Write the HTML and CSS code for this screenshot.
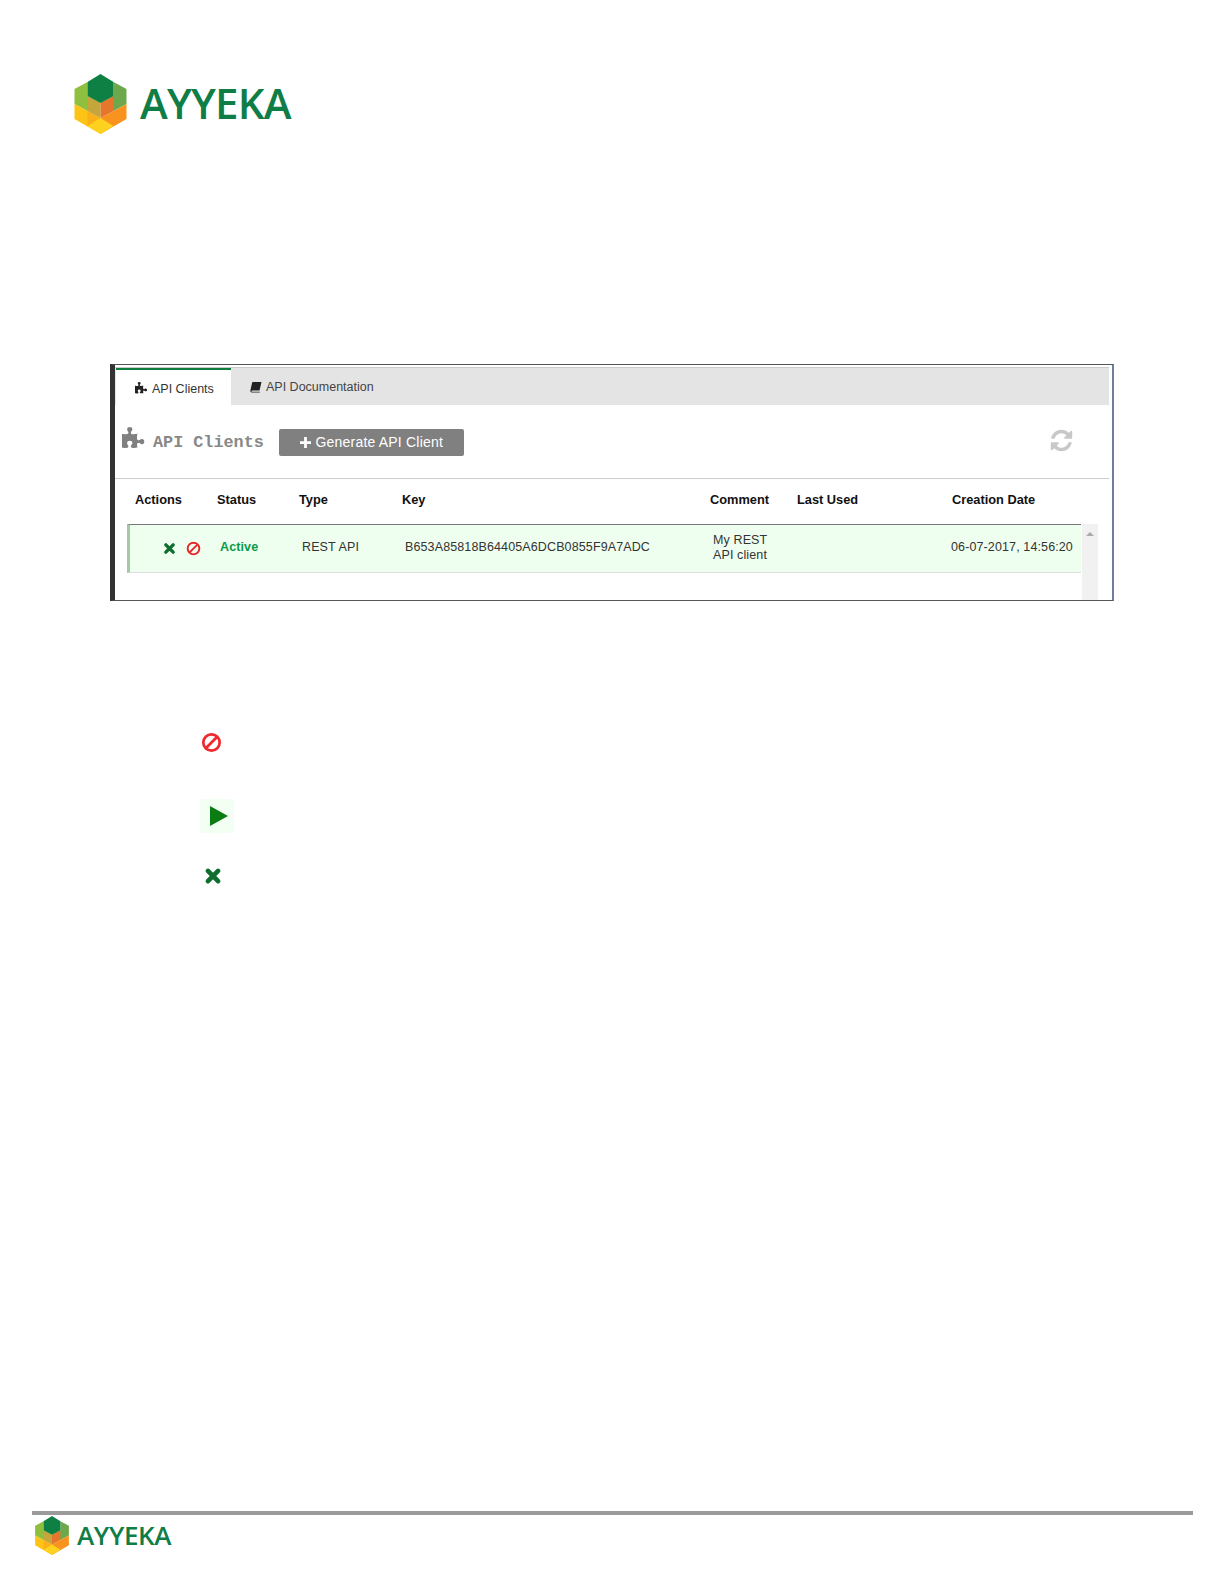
FILE: index.html
```html
<!DOCTYPE html>
<html lang="en">
<head>
<meta charset="utf-8">
<title>Ayyeka API Clients</title>
<link rel="stylesheet" href="styles.css">
</head>
<body>
<svg class="defs" width="0" height="0" aria-hidden="true">
  <symbol id="hex" viewBox="0 0 52 60">
    <polygon fill="#8ebf3f" points="0,15 13,8 13,22 26,29 13,37 0,30"/>
    <polygon fill="#6ea84c" points="52,15 39,8 39,22 26,29 39,37 52,30"/>
    <polygon fill="#fdc315" points="0,30 13,37 26,44 26,60 0,45"/>
    <polygon fill="#f7931e" points="52,30 39,37 26,44 26,60 52,45"/>
    <polygon fill="#fbb01a" points="13,37 26,44 26,52 13,52"/>
    <polygon fill="#c4a63a" points="13,22 26,29 26,44 13,37"/>
    <polygon fill="#e5762b" points="39,22 26,29 26,44 39,37"/>
    <polygon fill="#ffd21f" points="13,52 26,44 39,52 26,60"/>
    <polygon fill="#0f8043" points="26,0 39,8 39,22 26,29 13,22 13,8"/>
  </symbol>
  <symbol id="ban" viewBox="0 0 20 20">
    <circle cx="10" cy="10" r="7.8" fill="none" stroke="currentColor" stroke-width="2.6"/>
    <line x1="4.8" y1="15.2" x2="15.2" y2="4.8" stroke="currentColor" stroke-width="2.6"/>
  </symbol>
  <symbol id="cross" viewBox="0 0 16 16">
    <path d="M3.5 3.5L12.5 12.5M12.5 3.5L3.5 12.5" fill="none" stroke="currentColor" stroke-width="4.2" stroke-linecap="round"/>
  </symbol>
  <symbol id="puzzle" viewBox="0 0 1792 1792">
    <path d="M1664 1098q0 81-44.500 135t-123.500 54q-41 0-77.500-17.500t-59-38-56.500-38-71-17.500q-110 0-110 124 0 39 16 115t15 115v5q-22 0-33 1-34 3-97.500 11.500t-115.500 13.500-98 5q-61 0-103-26.500t-42-83.500q0-37 17.500-71t38-56.500 38-59 17.500-77.500q0-79-54-123.500t-135-44.500q-84 0-143 45.500t-59 127.500q0 43 15 83t33.500 64.500 33.500 53 15 50.500q0 45-46 89-37 35-117 35-95 0-245-24-9-2-27.500-4t-27.500-4l-13-2q-1 0-3-1-2 0-2-1v-1024q2 1 17.500 3.500t34 5 21.500 3.500q150 24 245 24 80 0 117-35 46-44 46-89 0-22-15-50.500t-33.500-53-33.500-64.500-15-83q0-82 59-127.500t144-45.500q80 0 134 44.500t54 123.500q0 41-17.500 77.500t-38 59-38 56.500-17.500 71q0 57 42 83.500t103 26.500q64 0 180-15t163-17v2q-1 2-3.500 17.500t-5 34-3.500 21.500q-24 150-24 245 0 80 35 117 44 46 89 46 22 0 50.500-15t53-33.500 64.500-33.500 83-15q82 0 127.500 59t45.500 143z" fill="currentColor"/>
  </symbol>
</svg>

<div class="page">
  <header class="top-logo">
    <svg class="hex-lg"><use href="#hex"/></svg>
    <span class="brand brand-lg">AYYEKA</span>
  </header>

  <section class="shot">
    <div class="tabs">
      <div class="tab tab-active">
        <svg class="tab-icon"><use href="#puzzle"/></svg>
        <span>API Clients</span>
      </div>
      <div class="tab">
        <svg class="tab-icon book" viewBox="0 0 12 12"><path d="M3 1h8.500L9.500 9.500H2.200c-.9 0-.9 1.300 0 1.300h7.800l-.2.700H1.800C.3 11.500.2 9.800.6 8.500L2 2.200C2.200 1.400 2.400 1 3 1z" fill="currentColor"/></svg>
        <span>API Documentation</span>
      </div>
    </div>

    <div class="toolbar">
      <svg class="head-icon"><use href="#puzzle"/></svg>
      <h2 class="head-title">API Clients</h2>
      <button class="gen-btn" type="button">
        <svg class="plus" viewBox="0 0 12 12"><path d="M4.500 0h3v4.500H12v3H7.500V12h-3V7.500H0v-3h4.500z" fill="currentColor"/></svg>
        <span>Generate API Client</span>
      </button>
      <svg class="refresh" viewBox="0 0 1792 1792"><path d="M1639 1056q0 5-1 7-64 268-268 434.500t-478 166.500q-146 0-282.500-55t-243.500-157l-129 129q-19 19-45 19t-45-19-19-45v-448q0-26 19-45t45-19h448q26 0 45 19t19 45-19 45l-137 137q71 66 161 102t187 36q134 0 250-65t186-179q11-17 53-117 8-23 30-23h192q13 0 22.500 9.500t9.500 22.500zm25-800v448q0 26-19 45t-45 19h-448q-26 0-45-19t-19-45 19-45l138-138q-148-137-349-137-134 0-250 65t-186 179q-11 17-53 117-8 23-30 23h-199q-13 0-22.500-9.500t-9.500-22.500v-7q65-268 270-434.500t480-166.500q146 0 284 55.500t245 156.500l130-129q19-19 45-19t45 19 19 45z" fill="currentColor"/></svg>
    </div>

    <div class="thead">
      <span>Actions</span>
      <span>Status</span>
      <span>Type</span>
      <span>Key</span>
      <span>Comment</span>
      <span>Last Used</span>
      <span>Creation Date</span>
    </div>

    <div class="tbody">
      <div class="row">
        <div class="actions">
          <svg class="act-x"><use href="#cross"/></svg>
          <svg class="act-ban"><use href="#ban"/></svg>
        </div>
        <div class="status">Active</div>
        <div>REST API</div>
        <div>B653A85818B64405A6DCB0855F9A7ADC</div>
        <div class="comment">My REST<br>API client</div>
        <div></div>
        <div>06-07-2017, 14:56:20</div>
      </div>
      <div class="scrollbar"><span class="arrow"></span></div>
    </div>
  </section>

  <ul class="legend">
    <li class="legend-item"><svg class="leg-ban"><use href="#ban"/></svg></li>
    <li class="legend-item play-box"><svg class="leg-play" viewBox="0 0 18 20"><polygon points="0,0 18,10 0,20" fill="currentColor"/></svg></li>
    <li class="legend-item"><svg class="leg-x"><use href="#cross"/></svg></li>
  </ul>

  <footer class="footer">
    <div class="foot-rule"></div>
    <div class="foot-logo">
      <svg class="hex-sm"><use href="#hex"/></svg>
      <span class="brand brand-sm">AYYEKA</span>
    </div>
  </footer>
</div>
</body>
</html>
```

FILE: styles.css
```css
html, body { margin: 0; padding: 0; background: #fff; }
.defs { display: block; height: 0; }
.page {
  height: 1584px;
  display: flex;
  flex-direction: column;
  font-family: "Liberation Sans", Arial, sans-serif;
  color: #333;
  overflow: hidden;
}

/* Logos */
.top-logo {
  display: flex;
  align-items: center;
  gap: 13px;
  padding: 74px 0 0 74px;
  height: 60px;
}
.hex-lg { width: 53px; height: 60px; }
.brand {
  font-family: "Open Sans", sans-serif;
  font-weight: 600;
  color: #0f7d46;
  line-height: 1;
}
.brand-lg { font-size: 42px; letter-spacing: -0.8px; margin-top: -2px; }
.brand-sm { font-size: 26px; letter-spacing: -0.35px; margin-top: -2px; }

/* Screenshot frame */
.shot {
  margin: 230px 0 0 110px;
  width: 1004px;
  height: 237px;
  box-sizing: border-box;
  border: 1px solid #555;
  border-left: 5px solid #333;
  border-right: 2px solid #6d7f9c;
  padding: 2px 3px 0 0;
  overflow: hidden;
  background: #fff;
}
.tabs {
  height: 37px;
  background: #e4e4e4;
  border-top: 1px solid #ccc;
  display: flex;
  font-size: 12.5px;
}
.tab {
  display: flex;
  align-items: center;
  gap: 4px;
  padding: 0 0 0 19px;
  color: #444;
}
.tab-active {
  width: 115px;
  box-sizing: border-box;
  margin: 0 0 -2px 1px;
  background: #fff;
  border-top: 2px solid #0f7d3c;
  color: #333;
}
.tab-icon { width: 13px; height: 13px; flex: none; color: #222; }
.book { width: 12px; height: 12px; }

.toolbar {
  height: 74px;
  box-sizing: border-box;
  border-bottom: 1px solid #ccc;
  display: flex;
  align-items: center;
  padding: 1px 35px 0 7px;
  color: #888;
}
.head-icon { width: 24px; height: 24px; flex: none; margin: -6px 7px 0 0; color: #808080; }
.head-title {
  margin: 0;
  font: bold 16.800px "Liberation Mono", monospace;
  color: #888;
  white-space: nowrap;
}
.gen-btn {
  margin-left: 15px;
  width: 185px;
  height: 27px;
  border: 0;
  border-radius: 2px;
  background: #808080;
  color: #fff;
  font: 14px "Liberation Sans", Arial, sans-serif;
  letter-spacing: 0.2px;
  display: flex;
  align-items: center;
  justify-content: center;
  gap: 5px;
  padding: 0;
}
.plus { width: 11px; height: 11px; flex: none; }
.refresh { width: 25px; height: 25px; margin: -4px 0 0 auto; color: #c8c8c8; }

.thead {
  display: grid;
  grid-template-columns: 82px 82px 103px 308px 87px 155px 1fr;
  height: 45px;
  box-sizing: border-box;
  padding: 0 0 5px 20px;
  align-items: center;
  font-size: 12.800px;
  font-weight: bold;
  color: #111;
}
.tbody {
  display: flex;
  align-items: flex-start;
  padding-left: 12px;
}
.row {
  width: 954px;
  height: 49px;
  box-sizing: border-box;
  padding-bottom: 3px;
  display: grid;
  grid-template-columns: 90px 82px 103px 308px 92px 146px 1fr;
  align-items: center;
  background: #efffef;
  border-top: 1px solid #777;
  border-bottom: 1px solid #ddd;
  border-left: 3px solid #a5c9a5;
  font-size: 12.500px;
  letter-spacing: 0.12px;
  color: #333;
}
.actions {
  display: flex;
  align-items: center;
  padding: 3px 0 0 33px;
  gap: 10px;
}
.act-x { width: 13px; height: 13px; color: #0f6e2f; }
.act-ban { width: 15px; height: 15px; color: #e8262a; }
.status { font-weight: bold; color: #0a9a4a; }
.comment { line-height: 15.500px; padding-top: 2px; }
.scrollbar {
  width: 16px;
  height: 78px;
  margin-left: 1px;
  background: #f1f1f1;
  display: flex;
  justify-content: center;
  padding-top: 8px;
  box-sizing: border-box;
}
.arrow {
  width: 0;
  height: 0;
  border-left: 4px solid transparent;
  border-right: 4px solid transparent;
  border-bottom: 4px solid #aaa;
}

/* Icon legend */
.legend {
  list-style: none;
  margin: 130px 0 0 200px;
  padding: 0;
  width: 34px;
  display: flex;
  flex-direction: column;
  color: #333;
}
.legend-item { display: flex; align-items: center; }
.leg-ban { width: 21px; height: 23px; margin-left: 1px; color: #ee2a2e; }
.play-box {
  width: 34px;
  height: 34px;
  margin-top: 45px;
  justify-content: center;
  background: #f3fff3;
}
.leg-play { width: 18px; height: 20px; margin-left: 3px; color: #0a7d12; }
.leg-x { width: 18px; height: 18px; margin: 34px 0 0 4px; color: #0f6e2f; }

/* Footer */
.footer {
  margin-top: auto;
  padding: 0 31px 29px 32px;
}
.foot-rule { height: 4px; background: #9b9b9b; }
.foot-logo {
  display: flex;
  align-items: center;
  gap: 8px;
  padding: 1px 0 0 3px;
}
.hex-sm { width: 34px; height: 39px; }
```
